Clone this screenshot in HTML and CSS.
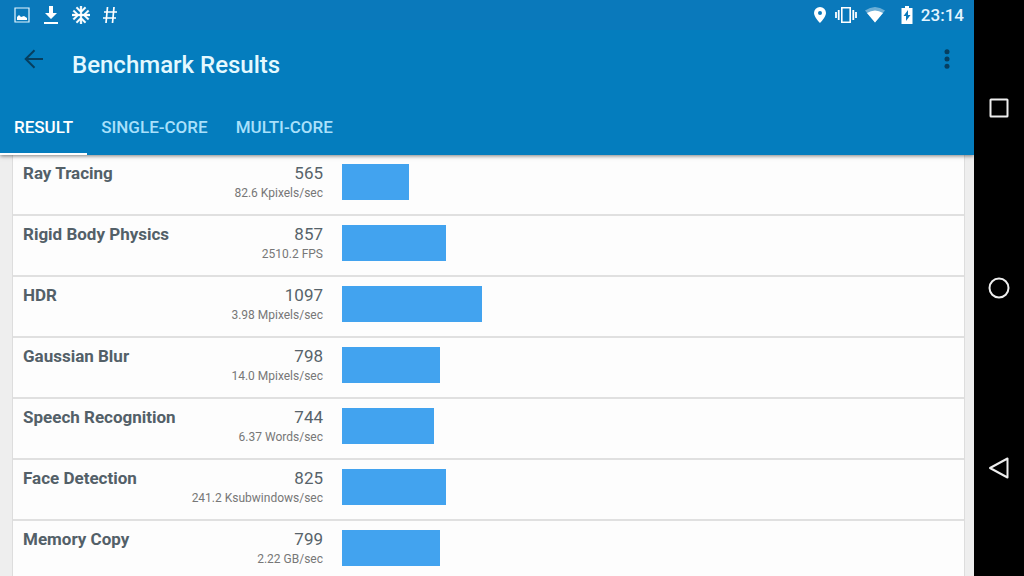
FILE: index.html
```
<!DOCTYPE html>
<html lang="en">
<head>
  <meta charset="UTF-8">
  <meta name="viewport" content="width=device-width, initial-scale=1.0">
  <title>Benchmark Results</title>
  <link rel="stylesheet" href="styles.css">
</head>
<body>
  <div class="app">
    <header class="header">
      <div class="status-bar">
        <div class="notifications">
          <svg width="16" height="16" viewBox="0 0 16 16"><path d="M1 1h14v14H1z" fill="none" stroke="#e4f5ff" stroke-width="1.2"/><path d="M3 13v-3l2-2 2 2 3-1 3 2v2z" fill="#fff"/></svg>
          <svg width="16" height="20" viewBox="0 0 16 20"><path d="M6 1h4v7h4l-6 6-6-6h4zM1 17h14v2H1z" fill="#fff"/></svg>
          <svg width="18" height="18" viewBox="2 2 20 20" fill="#fff"><path d="M22 11h-4.170l3.240-3.240-1.410-1.420L15 11h-2V9l4.660-4.660-1.420-1.410L13 6.170V2h-2v4.170L7.760 2.930 6.340 4.340 11 9v2H9L4.340 6.340 2.930 7.760 6.170 11H2v2h4.170l-3.240 3.240 1.410 1.420L9 13h2v2l-4.660 4.660 1.420 1.410L11 17.830V22h2v-4.170l3.240 3.240 1.420-1.410L13 15v-2h2l4.660 4.660 1.410-1.420L17.830 13H22z" stroke="#fff" stroke-width=".4"/></svg>
          <svg width="14" height="20" viewBox="0 0 14 20" fill="none" stroke="#fff" stroke-width="1.700"><path d="M4.500 2L3 18M11 2L9.500 18M1 7h13M0 13h13"/></svg>
        </div>
        <div class="system">
          <svg width="14" height="18" viewBox="0 0 14 18"><path d="M7 1a6 6 0 0 0-6 6c0 4 6 10 6 10s6-6 6-10a6 6 0 0 0-6-6zm0 4a2 2 0 1 1 0 4 2 2 0 0 1 0-4z" fill="#fff" fill-rule="evenodd"/></svg>
          <svg width="22" height="18" viewBox="0 0 22 18" fill="none" stroke="#fff"><path d="M6.800 1.800h8.400v14.400H6.800z" stroke-width="1.600"/><path d="M3.700 4v10M18.300 4v10" stroke-width="1.800"/><path d="M1 6v6M21 6v6" stroke-width="1.800"/></svg>
          <svg class="wifi" width="20" height="18" viewBox="0 0 20 18"><path d="M0 4.500Q10-2.500 20 4.500L10 16.500z" fill="#fff" opacity=".4"/><path d="M2 7Q10 2 18 7L10 16.500z" fill="#fff"/></svg>
          <svg width="12" height="18" viewBox="0 0 12 18"><path d="M4 0h4v2h3.500v16H.5V2H4z" fill="#fff"/><path d="M7 4v5h2.500L5 15v-5H2.500z" fill="#0a79bb"/></svg>
          <span class="clock">23:14</span>
        </div>
      </div>
      <div class="toolbar">
        <button class="icon-button" type="button" aria-label="Back">
          <svg width="20" height="20" viewBox="0 0 20 20" fill="none" stroke="#063f60" stroke-width="2"><path d="M19 10H2M10.500 1.200L1.700 10l8.800 8.800"/></svg>
        </button>
        <h1>Benchmark Results</h1>
        <button class="icon-button more" type="button" aria-label="More options">
          <svg width="6" height="20" viewBox="0 0 6 20" fill="#063f60"><circle cx="3" cy="2.700" r="2.500"/><circle cx="3" cy="10" r="2.500"/><circle cx="3" cy="17.300" r="2.500"/></svg>
        </button>
      </div>
      <nav class="tabs">
        <a class="tab active" href="#result">RESULT</a>
        <a class="tab" href="#single-core">SINGLE-CORE</a>
        <a class="tab" href="#multi-core">MULTI-CORE</a>
      </nav>
    </header>

    <main class="content" id="result">
      <table class="results">
        <tbody>
          <tr>
            <th scope="row">Ray Tracing</th>
            <td class="score">565<small>82.6 Kpixels/sec</small></td>
            <td><div class="bar" style="width: 10.9%"></div></td>
          </tr>
          <tr>
            <th scope="row">Rigid Body Physics</th>
            <td class="score">857<small>2510.2 FPS</small></td>
            <td><div class="bar" style="width: 17%"></div></td>
          </tr>
          <tr>
            <th scope="row">HDR</th>
            <td class="score">1097<small>3.98 Mpixels/sec</small></td>
            <td><div class="bar" style="width: 22.9%"></div></td>
          </tr>
          <tr>
            <th scope="row">Gaussian Blur</th>
            <td class="score">798<small>14.0 Mpixels/sec</small></td>
            <td><div class="bar" style="width: 16%"></div></td>
          </tr>
          <tr>
            <th scope="row">Speech Recognition</th>
            <td class="score">744<small>6.37 Words/sec</small></td>
            <td><div class="bar" style="width: 15%"></div></td>
          </tr>
          <tr>
            <th scope="row">Face Detection</th>
            <td class="score">825<small>241.2 Ksubwindows/sec</small></td>
            <td><div class="bar" style="width: 17%"></div></td>
          </tr>
          <tr>
            <th scope="row">Memory Copy</th>
            <td class="score">799<small>2.22 GB/sec</small></td>
            <td><div class="bar" style="width: 16%"></div></td>
          </tr>
        </tbody>
      </table>
    </main>
  </div>

  <nav class="system-nav" aria-label="System navigation">
    <button type="button" aria-label="Recent apps">
      <svg width="22" height="22" viewBox="0 0 22 22"><rect x="2.500" y="2.500" width="17" height="17" rx=".5"/></svg>
    </button>
    <button type="button" aria-label="Home">
      <svg width="22" height="22" viewBox="0 0 22 22"><circle cx="11" cy="11" r="9.500"/></svg>
    </button>
    <button type="button" aria-label="Back">
      <svg width="22" height="22" viewBox="0 0 22 22"><path d="M19.500 1.500v19L2 11z" stroke-linejoin="round"/></svg>
    </button>
  </nav>
</body>
</html>
```

FILE: styles.css
```
* { box-sizing: border-box; }
body { margin: 0; height: 100vh; display: flex; overflow: hidden; font-family: Roboto, sans-serif; background: #000; }
button { padding: 0; border: none; background: none; cursor: pointer; }
svg { display: block; }

.app { flex: 1; min-width: 0; display: flex; flex-direction: column; background: #eee; }

/* header */
.header { z-index: 1; background: #047dbe; color: #fff; box-shadow: 0 1px 4px rgba(0, 0, 0, 0.5); }
.status-bar { display: flex; justify-content: space-between; align-items: center; height: 30px; padding: 0 10px 0 14px; background: #0a79bb; }
.notifications, .system { display: flex; align-items: center; }
.notifications { gap: 13px; }
.system { gap: 8px; }
.wifi { margin-right: 8px; }
.clock { font-size: 17px; font-weight: 500; line-height: 20px; color: #e4f5ff; }
.toolbar { display: flex; height: 70px; padding: 0 24px; }
.icon-button { width: 20px; height: 58px; }
.toolbar h1 { flex: 1; margin: 0 0 0 28px; font-size: 24px; font-weight: 500; line-height: 70px; color: #e4f9ff; }
.more { width: 6px; }
.tabs { display: flex; }
.tab { height: 55px; padding: 0 14px; border-bottom: 2px solid transparent; font-size: 17px; font-weight: 500; line-height: 54px; color: #a9e0fb; text-decoration: none; }
.tab.active { color: #fff; border-bottom-color: #fff; }

/* result list */
.content { flex: 1; min-height: 0; overflow: hidden; padding: 0 9px 0 12px; }
.results { width: 100%; table-layout: fixed; border-collapse: separate; border-spacing: 0; background: #fdfdfd; border: solid #ddd; border-width: 0 1px; }
.results th, .results td { height: 61px; padding: 9px 10px 0; border-bottom: 2px solid #e0e0e0; vertical-align: top; }
.results th { width: 160px; text-align: left; font-size: 17px; font-weight: 700; line-height: 18px; color: #536068; white-space: nowrap; }
.results .score { width: 159px; padding-right: 9px; text-align: right; font-size: 17px; line-height: 18px; color: #57636a; white-space: nowrap; }
.score small { display: block; font-size: 12px; line-height: 22px; color: #777; }
.bar { height: 36px; background: #42a3ef; }

/* android buttons */
.system-nav { width: 50px; display: flex; flex-direction: column; justify-content: space-around; padding: 18px 0; }
.system-nav button { height: 60px; display: flex; align-items: center; justify-content: center; }
.system-nav svg { fill: none; stroke: #eee; stroke-width: 2; }
```
